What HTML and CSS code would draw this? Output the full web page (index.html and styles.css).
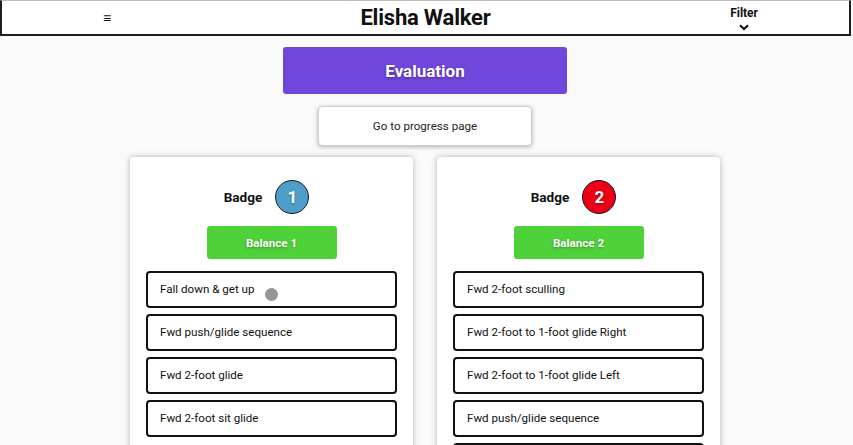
FILE: index.html
```html
<!DOCTYPE html>
<html>
<head>
<meta charset="utf-8">
<link rel="stylesheet" href="styles.css">
</head>
<body>
<header class="topbar">
  <div class="menu">≡</div>
  <h1 class="title">Elisha Walker</h1>
  <div class="filter">
    <span>Filter</span>
    <svg width="10" height="7" viewBox="0 0 10 7"><path d="M1 1.2 L5 5 L9 1.2" fill="none" stroke="#111" stroke-width="2"/></svg>
  </div>
</header>
<main class="page">
  <button class="eval">Evaluation</button>
  <button class="progress">Go to progress page</button>
  <div class="cards">
    <section class="card">
      <div class="badge-row"><span class="badge-label">Badge</span><span class="badge-num blue">1</span></div>
      <div class="level">Balance 1</div>
      <ul class="items">
        <li>Fall down &amp; get up</li>
        <li>Fwd push/glide sequence</li>
        <li>Fwd 2-foot glide</li>
        <li>Fwd 2-foot sit glide</li>
      </ul>
    </section>
    <section class="card">
      <div class="badge-row"><span class="badge-label">Badge</span><span class="badge-num red">2</span></div>
      <div class="level">Balance 2</div>
      <ul class="items">
        <li>Fwd 2-foot sculling</li>
        <li>Fwd 2-foot to 1-foot glide Right</li>
        <li>Fwd 2-foot to 1-foot glide Left</li>
        <li>Fwd push/glide sequence</li>
        <li>Fwd 2-foot sit glide</li>
      </ul>
    </section>
  </div>
  <div class="cursor-dot"></div>
</main>
</body>
</html>
```
FILE: styles.css
```css
* { box-sizing: border-box; }
html, body { margin: 0; padding: 0; }
body {
  font-family: Roboto, "Liberation Sans", sans-serif;
  background: #fafafa;
  color: #111;
  overflow: hidden;
  height: 445px;
  width: 853px;
}
.topbar {
  width: 851px;
  height: 36px;
  border: 2px solid #1e1e1e;
  border-top: 1px solid #bbb;
  background: #fff;
  display: grid;
  grid-template-columns: 1fr auto 1fr;
  align-items: center;
}
.menu {
  font-size: 14px;
  padding-left: 101px;
  line-height: 1;
}
.title {
  margin: 0;
  font-size: 22px;
  font-weight: 700;
  letter-spacing: -0.2px;
}
.filter {
  justify-self: end;
  margin-right: 91px;
  display: flex;
  flex-direction: column;
  align-items: center;
  font-size: 12px;
  font-weight: 700;
  line-height: 13px;
  margin-top: 2px;
}
.filter svg { margin-top: 4px; }
.page {
  position: relative;
  width: 850px;
  display: flex;
  flex-direction: column;
  align-items: center;
  padding-top: 11px;
}
button { font-family: inherit; cursor: pointer; }
.eval {
  width: 284px;
  height: 47px;
  border: none;
  border-radius: 3px;
  background: #7047dc;
  color: #fff;
  font-size: 17px;
  font-weight: 700;
  text-shadow: 0 1px 3px rgba(0,0,0,0.35);
}
.progress {
  margin-top: 12px;
  width: 214px;
  height: 40px;
  background: #fff;
  border: 1px solid #d0d0d0;
  border-radius: 4px;
  box-shadow: 0 1px 4px rgba(0,0,0,0.3);
  font-size: 11.6px;
  color: #222;
}
.cards {
  margin-top: 11px;
  display: flex;
  gap: 24px;
  align-items: flex-start;
}
.card {
  width: 283px;
  min-height: 320px;
  background: #fff;
  border-radius: 4px;
  box-shadow: 0 0 6px rgba(0,0,0,0.28);
  display: flex;
  flex-direction: column;
  align-items: center;
  padding-top: 23px;
  padding-bottom: 20px;
}
.badge-row {
  display: flex;
  align-items: center;
  gap: 13px;
  height: 34px;
  margin-right: 10px;
}
.badge-label {
  font-size: 13.6px;
  font-weight: 700;
}
.badge-num {
  width: 34px;
  height: 34px;
  border-radius: 50%;
  border: 1.5px solid #1a1a1a;
  display: flex;
  align-items: center;
  justify-content: center;
  color: #fff;
  font-size: 17px;
  font-weight: 700;
  text-shadow: 0 1px 2px rgba(0,0,0,0.35);
}
.blue { background: #4e9ec8; }
.red { background: #ec0016; }
.level {
  margin-top: 12px;
  width: 130px;
  height: 33px;
  border-radius: 3px;
  background: #4fd13a;
  color: #fff;
  font-size: 11.6px;
  font-weight: 700;
  display: flex;
  align-items: center;
  justify-content: center;
  text-shadow: 0 1px 3px rgba(0,0,0,0.3);
}
.items {
  list-style: none;
  margin: 12px 0 0;
  padding: 0;
  display: flex;
  flex-direction: column;
  gap: 6px;
}
.items li {
  flex-shrink: 0;
  width: 251px;
  height: 37px;
  border: 2px solid #111;
  border-radius: 4px;
  display: flex;
  align-items: center;
  padding-left: 12px;
  padding-bottom: 1px;
  font-size: 11.6px;
  color: #111;
}
.cursor-dot {
  position: absolute;
  left: 265px;
  top: 252px;
  width: 13px;
  height: 13px;
  border-radius: 50%;
  background: #959595;
}
```
